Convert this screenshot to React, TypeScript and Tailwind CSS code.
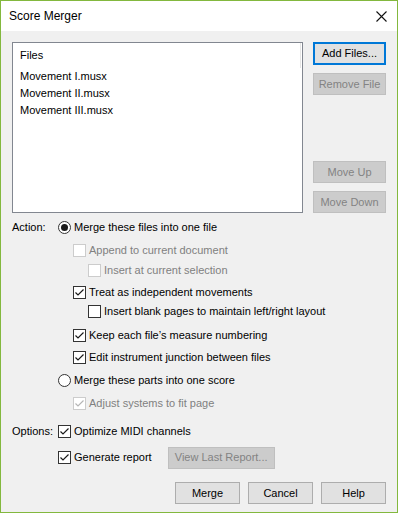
import React from 'react';

const font = { fontFamily: '"Liberation Sans", Arial, sans-serif' };

const CheckBox = ({ checked, disabled }: { checked?: boolean; disabled?: boolean }) => (
  <span
    className={`w-[13px] h-[13px] shrink-0 border bg-white flex items-center justify-center ${
      disabled ? 'border-[#cccccc]' : 'border-[#333333]'
    }`}
  >
    {checked && (
      <svg width="11" height="11" viewBox="0 0 11 11">
        <polyline
          points="1.5,5.5 4,8 9.5,2.5"
          fill="none"
          stroke={disabled ? '#b5b5b5' : '#1a1a1a'}
          strokeWidth="1.2"
        />
      </svg>
    )}
  </span>
);

const Radio = ({ checked }: { checked?: boolean }) => (
  <span className="w-[13px] h-[13px] shrink-0 rounded-full border border-[#333333] bg-white flex items-center justify-center">
    {checked && <span className="w-[7px] h-[7px] rounded-full bg-[#1a1a1a]" />}
  </span>
);

const Btn = ({
  children,
  disabled,
  focused,
  className = '',
}: {
  children: React.ReactNode;
  disabled?: boolean;
  focused?: boolean;
  className?: string;
}) => (
  <div
    className={`flex items-center justify-center text-[11px] leading-none ${
      focused
        ? 'border-2 border-[#0078d7] bg-[#e1e1e1] text-black'
        : disabled
        ? 'border border-[#bfbfbf] bg-[#cccccc] text-[#838383]'
        : 'border border-[#adadad] bg-[#e1e1e1] text-black'
    } ${className}`}
  >
    {children}
  </div>
);

// one option line: box + text, indented by level
const Option = ({
  level,
  mt,
  box,
  label,
  disabled,
  children,
}: {
  level: 0 | 1 | 2;
  mt: string;
  box: React.ReactNode;
  label: string;
  disabled?: boolean;
  children?: React.ReactNode;
}) => {
  const indent = ['pl-[0px]', 'pl-[15px]', 'pl-[30px]'][level];
  return (
    <div className={`flex items-center h-[13px] ${mt} ${indent}`}>
      {box}
      <span className={`ml-[3px] whitespace-nowrap leading-none ${disabled ? 'text-[#808080]' : 'text-black'}`}>
        {label}
      </span>
      {children}
    </div>
  );
};

export default function App() {
  return (
    <div
      className="w-[398px] h-[513px] border border-[#83b83e] bg-[#f0f0f0] flex flex-col text-[11px] text-black"
      style={font}
    >
      {/* title bar */}
      <div className="h-[30px] bg-white flex items-center justify-between pl-[8px] pr-[9px] shrink-0">
        <span className="text-[12px]">Score Merger</span>
        <svg width="11" height="11" viewBox="0 0 11 11" className="mr-[1px]">
          <path d="M0.5 0.5 L10.5 10.5 M10.5 0.5 L0.5 10.5" stroke="#111" strokeWidth="1.1" />
        </svg>
      </div>

      <div className="flex flex-col px-[11px] pt-[11px]">
        {/* files + side buttons */}
        <div className="flex">
          <div className="w-[291px] h-[171px] border border-[#828790] bg-white flex flex-col">
            <div className="h-[25px] flex items-center pl-[7px] border-r border-[#e5e5e5] mr-[1px]">Files</div>
            <div className="h-[17px] flex items-center pl-[7px]">Movement I.musx</div>
            <div className="h-[17px] flex items-center pl-[7px]">Movement II.musx</div>
            <div className="h-[17px] flex items-center pl-[7px]">Movement III.musx</div>
          </div>
          <div className="ml-[10px] w-[73px] flex flex-col">
            <Btn focused className="h-[23px]">Add Files...</Btn>
            <Btn disabled className="h-[22px] mt-[8px]">Remove File</Btn>
            <div className="flex-1" />
            <Btn disabled className="h-[22px]">Move Up</Btn>
            <Btn disabled className="h-[22px] mt-[8px]">Move Down</Btn>
          </div>
        </div>

        {/* action */}
        <div className="flex mt-[8px]">
          <div className="w-[46px] h-[13px] flex items-center">Action:</div>
          <div className="flex flex-col">
            <Option level={0} mt="mt-0" box={<Radio checked />} label="Merge these files into one file" />
            <Option level={1} mt="mt-[10px]" box={<CheckBox disabled />} label="Append to current document" disabled />
            <Option level={2} mt="mt-[7px]" box={<CheckBox disabled />} label="Insert at current selection" disabled />
            <Option level={1} mt="mt-[9px]" box={<CheckBox checked />} label="Treat as independent movements" />
            <Option level={2} mt="mt-[6px]" box={<CheckBox />} label="Insert blank pages to maintain left/right layout" />
            <Option level={1} mt="mt-[11px]" box={<CheckBox checked />} label="Keep each file’s measure numbering" />
            <Option level={1} mt="mt-[9px]" box={<CheckBox checked />} label="Edit instrument junction between files" />
            <Option level={0} mt="mt-[10px]" box={<Radio />} label="Merge these parts into one score" />
            <Option level={1} mt="mt-[10px]" box={<CheckBox checked disabled />} label="Adjust systems to fit page" disabled />
          </div>
        </div>

        {/* options */}
        <div className="flex mt-[15px]">
          <div className="w-[46px] h-[13px] flex items-center">Options:</div>
          <div className="flex flex-col">
            <Option level={0} mt="mt-0" box={<CheckBox checked />} label="Optimize MIDI channels" />
            <Option level={0} mt="mt-[13px]" box={<CheckBox checked />} label="Generate report">
              <Btn disabled className="h-[22px] w-[107px] ml-[16px] shrink-0">View Last Report...</Btn>
            </Option>
          </div>
        </div>

        {/* bottom buttons */}
        <div className="flex justify-end gap-[8px] mt-[18px]">
          <Btn className="h-[22px] w-[65px]">Merge</Btn>
          <Btn className="h-[22px] w-[65px]">Cancel</Btn>
          <Btn className="h-[22px] w-[65px]">Help</Btn>
        </div>
      </div>
    </div>
  );
}
